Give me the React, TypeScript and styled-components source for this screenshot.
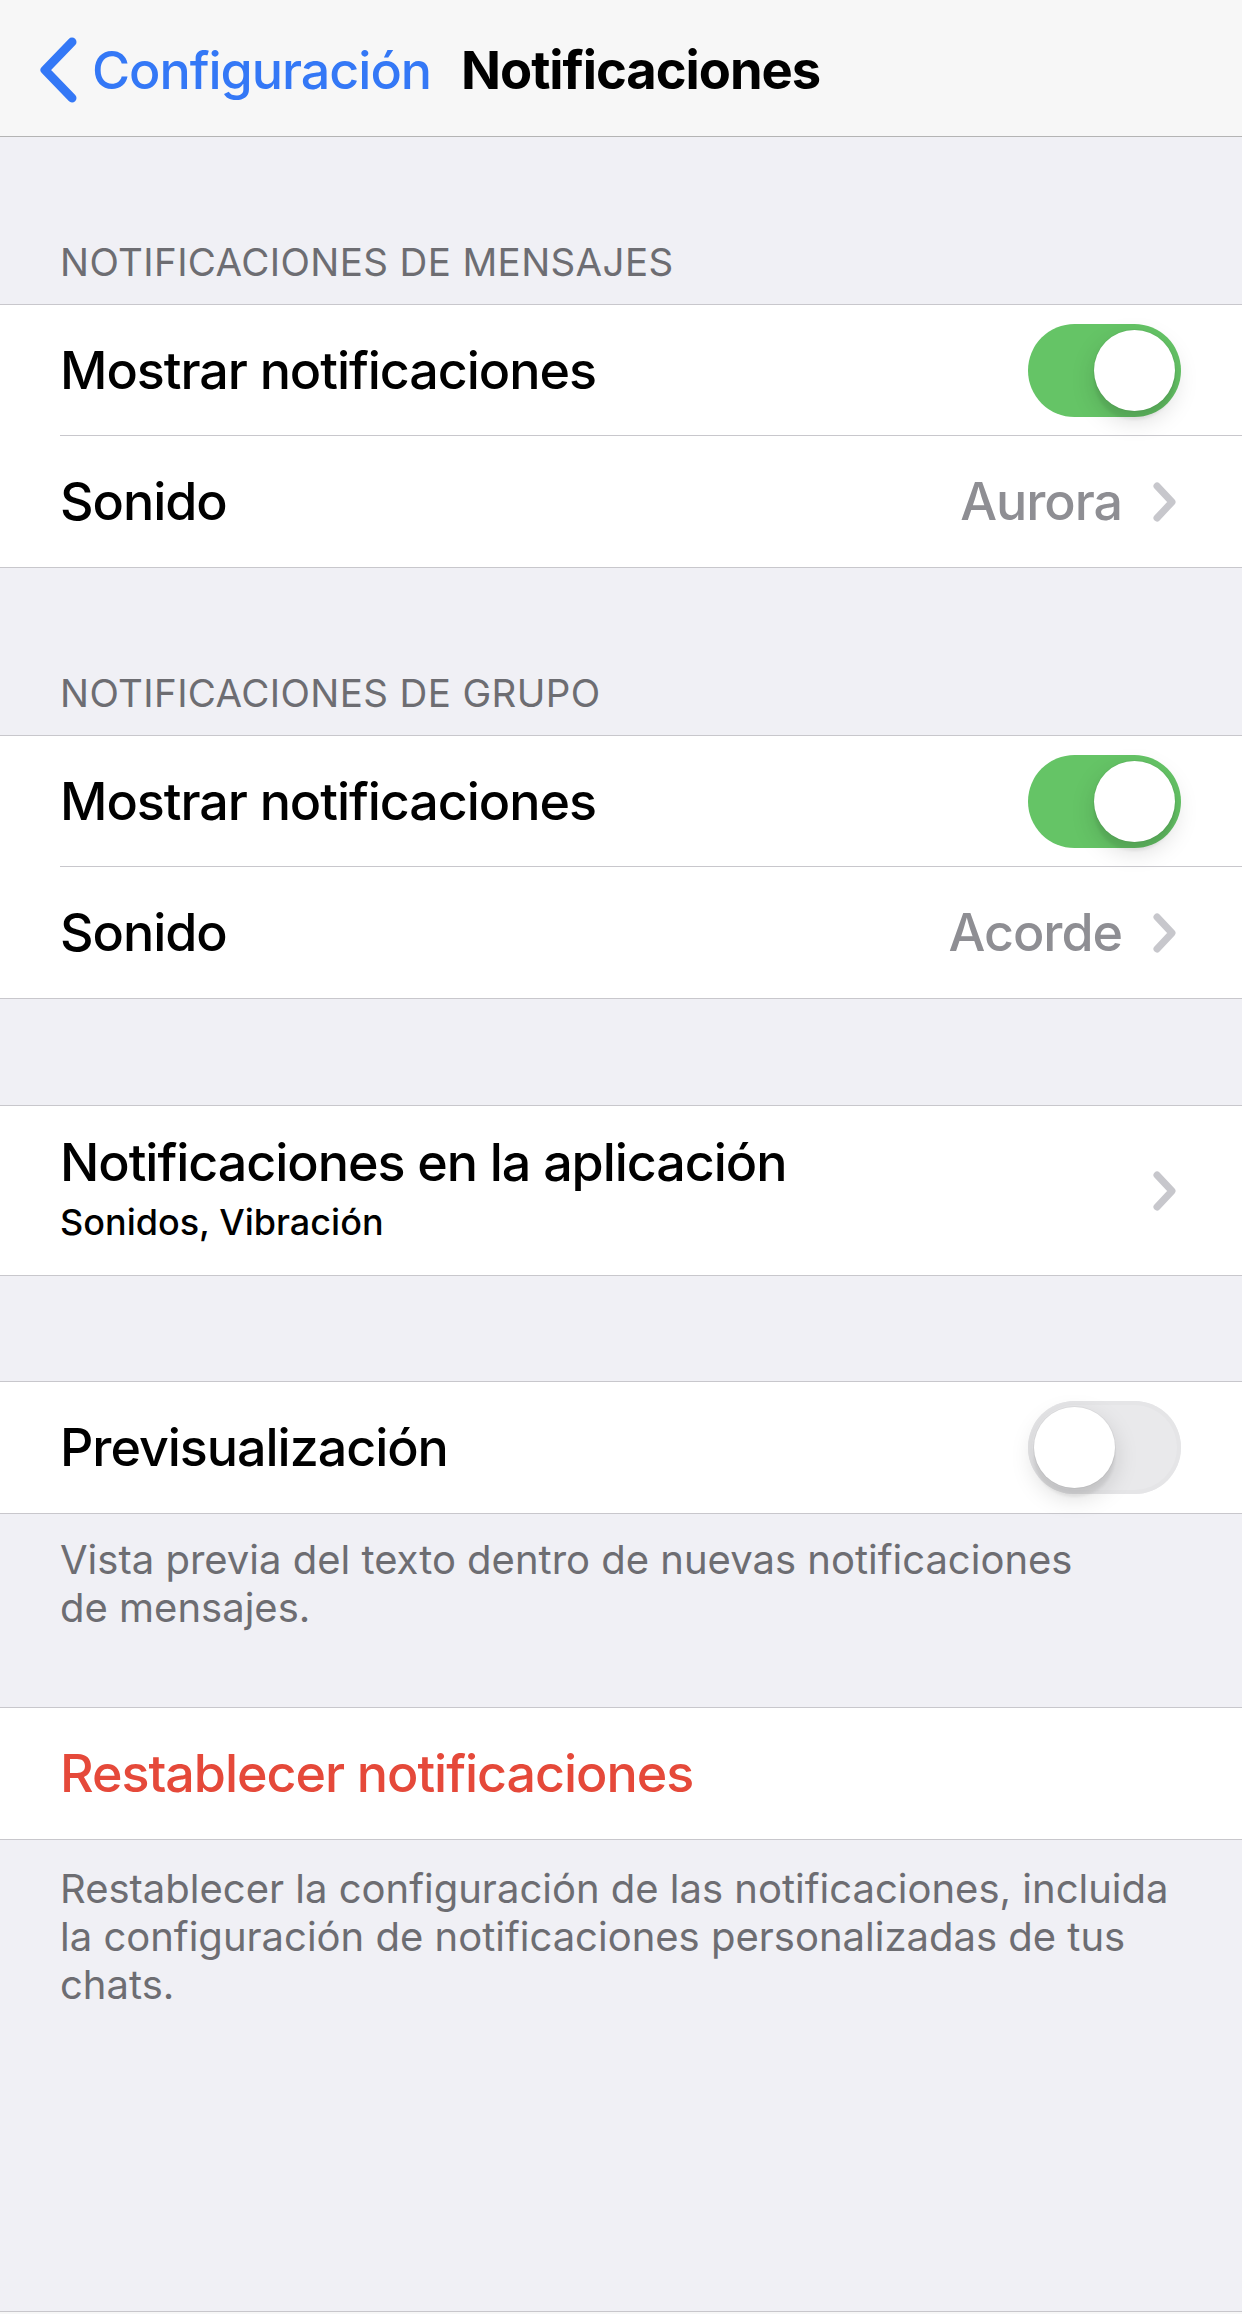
import React from "react";
import styled, { createGlobalStyle } from "styled-components";

const GlobalStyle = createGlobalStyle`
  * { box-sizing: border-box; }
  html, body { margin: 0; padding: 0; }
  body {
    background: #f0f0f5;
    font-family: Inter, "Noto Sans", "Liberation Sans", sans-serif;
    -webkit-font-smoothing: antialiased;
  }
`;

const Page = styled.div`
  display: flex;
  flex-direction: column;
  min-height: 2314px;
  width: 1242px;
  background: #f0f0f5;
`;

const NavBar = styled.header`
  height: 137px;
  display: flex;
  align-items: center;
  padding: 4px 0 0 38px;
  gap: 30px;
  background: #f7f7f7;
  border-bottom: 1px solid #b4b4b4;
`;

const BackButton = styled.div`
  display: flex;
  align-items: center;
  gap: 14px;
  color: #3478f6;
  font-size: 52px;
  font-weight: 500;
  letter-spacing: -0.02em;
`;

const NavTitle = styled.h1`
  margin: 0;
  font-size: 52.5px;
  font-weight: 700;
  letter-spacing: -0.02em;
  color: #000;
`;

const SectionHeader = styled.div`
  height: 167px;
  display: flex;
  align-items: flex-end;
  padding: 0 60px 19px;
  font-size: 38.5px;
  letter-spacing: 0.01em;
  color: #6d6d72;
  text-transform: uppercase;
`;

const Spacer = styled.div<{ $h: number }>`
  height: ${(p) => p.$h}px;
`;

const Group = styled.section`
  background: #fff;
  border-top: 1px solid #c8c7cc;
  border-bottom: 1px solid #c8c7cc;
`;

const Row = styled.div<{ $h?: number; $divider?: boolean }>`
  position: relative;
  height: ${(p) => p.$h ?? 131}px;
  display: flex;
  align-items: center;
  padding: 0 61px 0 60px;
  ${(p) =>
    p.$divider &&
    `&::after {
      content: "";
      position: absolute;
      left: 60px;
      right: 0;
      bottom: 0;
      height: 1px;
      background: #c8c7cc;
    }`}
`;

const Label = styled.div<{ $color?: string }>`
  flex: 1;
  font-size: 52px;
  font-weight: 500;
  letter-spacing: -0.02em;
  color: ${(p) => p.$color ?? "#000"};
`;

const LabelStack = styled.div`
  flex: 1;
  display: flex;
  flex-direction: column;
`;

const Title = styled.div`
  font-size: 52px;
  font-weight: 500;
  letter-spacing: -0.02em;
  line-height: 62px;
  color: #000;
`;

const Subtitle = styled.div`
  font-size: 36px;
  font-weight: 500;
  line-height: 56px;
  color: #000;
`;

const Value = styled.span`
  font-size: 52px;
  font-weight: 500;
  letter-spacing: -0.02em;
  color: #8e8e93;
  margin-right: 30px;
`;

const ChevronBox = styled.span`
  display: flex;
  margin-right: 3px;
`;

const Track = styled.div<{ $on: boolean }>`
  position: relative;
  width: 153px;
  height: 93px;
  border-radius: 47px;
  background: ${(p) => (p.$on ? "#65c466" : "#e9e9eb")};
  box-shadow: ${(p) => (p.$on ? "none" : "inset 0 0 0 4px #e5e5e7")};
`;

const Knob = styled.div<{ $on: boolean }>`
  position: absolute;
  top: 6px;
  left: ${(p) => (p.$on ? "66px" : "6px")};
  width: 81px;
  height: 81px;
  border-radius: 50%;
  background: #fff;
  box-shadow: 0 9px 3px rgba(0, 0, 0, 0.06), 0 9px 24px rgba(0, 0, 0, 0.15),
    0 0 0 1px rgba(0, 0, 0, 0.04);
`;

const Footer = styled.div<{ $pt: number; $pb: number }>`
  padding: ${(p) => p.$pt}px 60px ${(p) => p.$pb}px;
  font-size: 40px;
  line-height: 48px;
  color: #6d6d72;
`;

const Fill = styled.div`
  flex: 1;
`;

const BottomEdge = styled.div`
  height: 3px;
  border-top: 1px solid #c8c7cc;
  background: #f7f7f7;
`;

const Chevron = () => (
  <ChevronBox>
    <svg width="26" height="42" viewBox="0 0 26 42">
      <path
        d="M5 5 L20 21 L5 37"
        fill="none"
        stroke="#c7c7cc"
        strokeWidth="7"
        strokeLinecap="round"
        strokeLinejoin="round"
      />
    </svg>
  </ChevronBox>
);

const BackChevron = () => (
  <svg width="40" height="66" viewBox="0 0 40 66">
    <path
      d="M34 5 L7 33 L34 61"
      fill="none"
      stroke="#3478f6"
      strokeWidth="9"
      strokeLinecap="round"
      strokeLinejoin="round"
    />
  </svg>
);

const Toggle: React.FC<{ on: boolean }> = ({ on }) => (
  <Track $on={on}>
    <Knob $on={on} />
  </Track>
);

const App: React.FC = () => {
  return (
    <>
      <GlobalStyle />
      <Page>
        <NavBar>
          <BackButton>
            <BackChevron />
            Configuración
          </BackButton>
          <NavTitle>Notificaciones</NavTitle>
        </NavBar>

        <SectionHeader>Notificaciones de mensajes</SectionHeader>
        <Group>
          <Row $divider>
            <Label>Mostrar notificaciones</Label>
            <Toggle on />
          </Row>
          <Row>
            <Label>Sonido</Label>
            <Value>Aurora</Value>
            <Chevron />
          </Row>
        </Group>

        <SectionHeader>Notificaciones de grupo</SectionHeader>
        <Group>
          <Row $divider>
            <Label>Mostrar notificaciones</Label>
            <Toggle on />
          </Row>
          <Row>
            <Label>Sonido</Label>
            <Value>Acorde</Value>
            <Chevron />
          </Row>
        </Group>

        <Spacer $h={106} />
        <Group>
          <Row $h={169}>
            <LabelStack>
              <Title>Notificaciones en la aplicación</Title>
              <Subtitle>Sonidos, Vibración</Subtitle>
            </LabelStack>
            <Chevron />
          </Row>
        </Group>

        <Spacer $h={105} />
        <Group>
          <Row>
            <Label>Previsualización</Label>
            <Toggle on={false} />
          </Row>
        </Group>
        <Footer $pt={22} $pb={75}>
          Vista previa del texto dentro de nuevas notificaciones
          <br />
          de mensajes.
        </Footer>

        <Group>
          <Row>
            <Label $color="#e5493a">Restablecer notificaciones</Label>
          </Row>
        </Group>
        <Footer $pt={25} $pb={0}>
          Restablecer la configuración de las notificaciones, incluida
          <br />
          la configuración de notificaciones personalizadas de tus
          <br />
          chats.
        </Footer>
        <Fill />
        <BottomEdge />
      </Page>
    </>
  );
};

export default App;
